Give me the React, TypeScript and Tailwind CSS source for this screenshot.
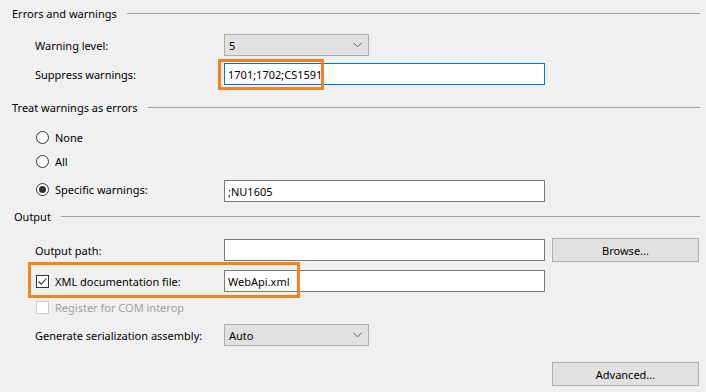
import React from "react";

const font = { fontFamily: '"Noto Sans", "Open Sans", sans-serif' };

function Header({ text, ml = "ml-[12px]", mt }: { text: string; ml?: string; mt: string }) {
  return (
    <div className={`flex items-center h-[14px] ${mt} ${ml} mr-[6px]`}>
      <span className="text-[11px] text-black leading-none whitespace-nowrap">{text}</span>
      <div className="flex-1 h-px bg-[#a0a0a0] ml-[10px]" />
    </div>
  );
}

function Chevron() {
  return (
    <svg width="9" height="6" viewBox="0 0 9 6" className="text-[#606060]">
      <path d="M0.5 0.8 L4.5 4.8 L8.5 0.8" fill="none" stroke="currentColor" strokeWidth="1" />
    </svg>
  );
}

function Dropdown({ value }: { value: string }) {
  return (
    <div className="w-[145px] h-[22px] bg-[#e1e1e1] border border-[#adadad] flex items-center justify-between pl-[4px] pr-[6px]">
      <span className="text-[11px] text-black leading-none">{value}</span>
      <Chevron />
    </div>
  );
}

function TextBox({ value = "", focused = false }: { value?: string; focused?: boolean }) {
  return (
    <div
      className={`w-[321px] h-[22px] bg-white border flex items-center pl-[3px] ${
        focused ? "border-[#0078d7]" : "border-[#7a7a7a]"
      }`}
    >
      <span className="text-[11px] text-black leading-none">{value}</span>
    </div>
  );
}

function Radio({ checked }: { checked?: boolean }) {
  return (
    <div className="w-[13px] h-[13px] rounded-full border border-[#333] bg-white flex items-center justify-center">
      {checked && <div className="w-[7px] h-[7px] rounded-full bg-[#333]" />}
    </div>
  );
}

function Button({ text }: { text: string }) {
  return (
    <div className="w-[147px] h-[24px] bg-[#e1e1e1] border border-[#adadad] flex items-center justify-center">
      <span className="text-[11px] text-black leading-none">{text}</span>
    </div>
  );
}

export default function App() {
  return (
    <div className="relative w-[706px] h-[392px] bg-[#f0f0f0] overflow-hidden pt-[6px]" style={font}>
      <Header text="Errors and warnings" mt="mt-0" />

      <div className="flex items-center h-[22px] mt-[14px] pl-[35px]">
        <span className="w-[189px] text-[11px] text-black leading-none">Warning level:</span>
        <Dropdown value="5" />
      </div>

      <div className="flex items-center h-[22px] mt-[7px] pl-[35px]">
        <span className="w-[189px] text-[11px] text-black leading-none">Suppress warnings:</span>
        <TextBox value="1701;1702;CS1591" focused />
      </div>

      <Header text="Treat warnings as errors" mt="mt-[15px]" />

      <div className="flex items-center h-[20px] mt-[13px] pl-[36px]">
        <Radio />
        <span className="ml-[6px] text-[11px] text-black leading-none">None</span>
      </div>
      <div className="flex items-center h-[20px] mt-[4px] pl-[36px]">
        <Radio />
        <span className="ml-[6px] text-[11px] text-black leading-none">All</span>
      </div>
      <div className="flex items-center h-[22px] mt-[9px] pl-[36px]">
        <div className="w-[188px] flex items-center -mt-[4px]">
          <Radio checked />
          <span className="ml-[6px] text-[11px] text-black leading-none">Specific warnings:</span>
        </div>
        <TextBox value=";NU1605" />
      </div>

      <Header text="Output" ml="ml-[14px]" mt="mt-[7px]" />

      <div className="flex items-center h-[24px] mt-[15px] pl-[35px]">
        <span className="w-[189px] text-[11px] text-black leading-none">Output path:</span>
        <TextBox />
        <div className="ml-[7px]">
          <Button text="Browse..." />
        </div>
      </div>

      <div className="flex items-center h-[22px] mt-[8px] pl-[36px]">
        <div className="w-[188px] flex items-center">
          <div className="w-[13px] h-[13px] border border-[#333] bg-white flex items-center justify-center">
            <svg width="11" height="11" viewBox="0 0 11 11">
              <path d="M1.5 5.5 L4.2 8.2 L9.5 2.5" fill="none" stroke="#333" strokeWidth="1.1" />
            </svg>
          </div>
          <span className="ml-[6px] text-[11px] text-black leading-none">XML documentation file:</span>
        </div>
        <TextBox value="WebApi.xml" />
      </div>

      <div className="flex items-center h-[20px] mt-[5px] pl-[36px]">
        <div className="w-[13px] h-[13px] border border-[#cccccc] bg-white" />
        <span className="ml-[6px] text-[11px] text-[#a0a0a0] leading-none">Register for COM interop</span>
      </div>

      <div className="flex items-center h-[22px] mt-[7px] pl-[35px]">
        <span className="w-[189px] text-[11px] text-black leading-none">Generate serialization assembly:</span>
        <Dropdown value="Auto" />
      </div>

      <div className="flex justify-end h-[24px] mt-[16px] pr-[7px]">
        <Button text="Advanced..." />
      </div>

      {/* orange annotation boxes */}
      <div className="absolute left-[218px] top-[59px] w-[106px] h-[31px] border-[3px] border-[#f5821f] pointer-events-none" />
      <div className="absolute left-[28px] top-[262px] w-[272px] h-[36px] border-[3px] border-[#f5821f] pointer-events-none" />
    </div>
  );
}
